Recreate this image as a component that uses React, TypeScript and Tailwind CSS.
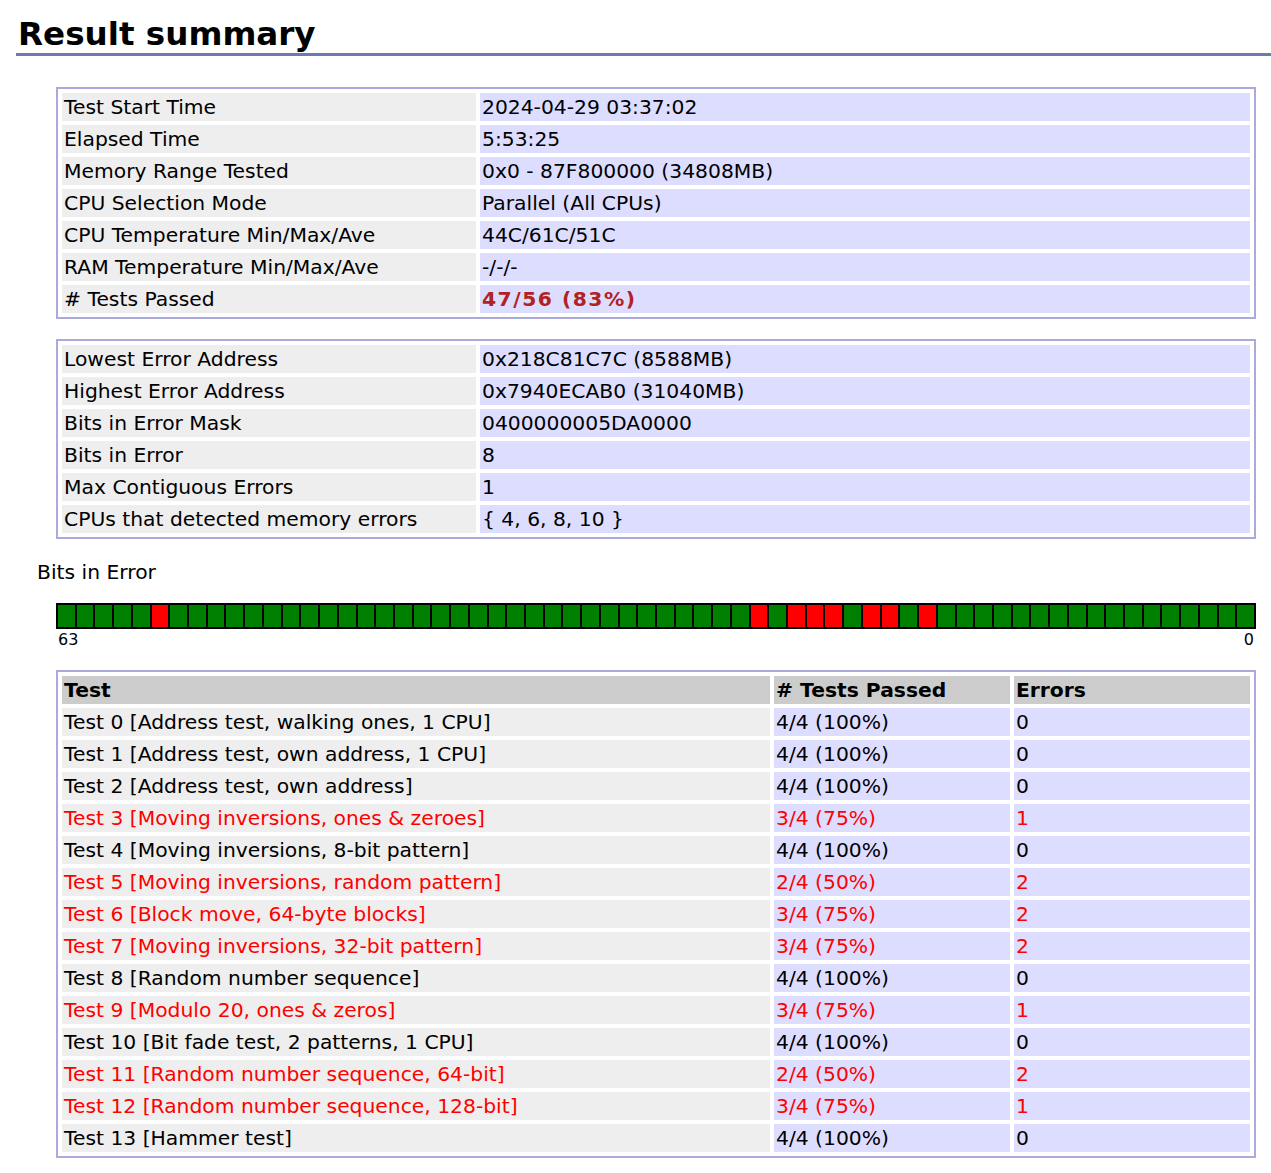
const summary: [string, string][] = [
    ['Test Start Time', '2024-04-29 03:37:02'],
    ['Elapsed Time', '5:53:25'],
    ['Memory Range Tested', '0x0 - 87F800000 (34808MB)'],
    ['CPU Selection Mode', 'Parallel (All CPUs)'],
    ['CPU Temperature Min/Max/Ave', '44C/61C/51C'],
    ['RAM Temperature Min/Max/Ave', '-/-/-'],
];

const errorInfo: [string, string][] = [
    ['Lowest Error Address', '0x218C81C7C (8588MB)'],
    ['Highest Error Address', '0x7940ECAB0 (31040MB)'],
    ['Bits in Error Mask', '0400000005DA0000'],
    ['Bits in Error', '8'],
    ['Max Contiguous Errors', '1'],
    ['CPUs that detected memory errors', '{ 4, 6, 8, 10 }'],
];

const tests: [string, string, string, boolean][] = [
    ['Test 0 [Address test, walking ones, 1 CPU]', '4/4 (100%)', '0', false],
    ['Test 1 [Address test, own address, 1 CPU]', '4/4 (100%)', '0', false],
    ['Test 2 [Address test, own address]', '4/4 (100%)', '0', false],
    ['Test 3 [Moving inversions, ones & zeroes]', '3/4 (75%)', '1', true],
    ['Test 4 [Moving inversions, 8-bit pattern]', '4/4 (100%)', '0', false],
    ['Test 5 [Moving inversions, random pattern]', '2/4 (50%)', '2', true],
    ['Test 6 [Block move, 64-byte blocks]', '3/4 (75%)', '2', true],
    ['Test 7 [Moving inversions, 32-bit pattern]', '3/4 (75%)', '2', true],
    ['Test 8 [Random number sequence]', '4/4 (100%)', '0', false],
    ['Test 9 [Modulo 20, ones & zeros]', '3/4 (75%)', '1', true],
    ['Test 10 [Bit fade test, 2 patterns, 1 CPU]', '4/4 (100%)', '0', false],
    ['Test 11 [Random number sequence, 64-bit]', '2/4 (50%)', '2', true],
    ['Test 12 [Random number sequence, 128-bit]', '3/4 (75%)', '1', true],
    ['Test 13 [Hammer test]', '4/4 (100%)', '0', false],
];

// bit mask 0x0400000005DA0000, bit 63 on the left
const MASK = 0x0400000005DA0000n;
const bits = Array.from({ length: 64 }, (_, i) => ((MASK >> BigInt(63 - i)) & 1n) === 1n);

const cell = 'h-[28px] px-[2px] pt-[1px] pb-0 align-middle leading-[27px]';

function InfoTable({ rows, extra }: { rows: [string, string][], extra?: React.ReactNode }) {
    return (
        <table className="ml-[40px] w-[1200px] border-2 border-[#aaaadd] border-separate border-spacing-[4px]">
            <tbody>
                {rows.map(([k, v]) => (
                    <tr key={k}>
                        <td className={`${cell} w-[414px] bg-[#eeeeee]`}>{k}</td>
                        <td className={`${cell} bg-[#ddddff]`}>{v}</td>
                    </tr>
                ))}
                {extra}
            </tbody>
        </table>
    );
}

export default function App() {
    return (
        <div className="bg-white text-black text-[20.3px] min-h-[1173px] pl-[16px]" style={{ fontFamily: '"DejaVu Sans", Verdana, sans-serif' }}>
            <h1 className="pt-[16px] text-[32.6px] font-bold leading-[37px] border-b-[3px] border-[#6a7bb3] pl-[2px]">
                Result summary
            </h1>

            <div className="mt-[31px]">
                <InfoTable
                    rows={summary}
                    extra={
                        <tr>
                            <td className={`${cell} w-[414px] bg-[#eeeeee]`}># Tests Passed</td>
                            <td className={`${cell} bg-[#ddddff] font-bold tracking-[1.5px] text-[#b22222]`}>47/56 (83%)</td>
                        </tr>
                    }
                />
            </div>

            <div className="mt-[20px]">
                <InfoTable rows={errorInfo} />
            </div>

            <div className="mt-[21px] ml-[21px] leading-[24px]">Bits in Error</div>

            <div className="mt-[19px] ml-[40px] w-[1200px]">
                <div className="flex h-[26px] border-2 border-black bg-black gap-[2px]">
                    {bits.map((b, i) => (
                        <div key={i} className={`flex-1 ${b ? 'bg-[#ff0000]' : 'bg-[#008000]'}`} />
                    ))}
                </div>
                <div className="flex justify-between text-[16px] leading-[20px] px-[2px] mt-[1px]">
                    <span>63</span>
                    <span>0</span>
                </div>
            </div>

            <table className="mt-[20px] ml-[40px] w-[1200px] border-2 border-[#aaaadd] border-separate border-spacing-[4px]">
                <thead>
                    <tr className="font-bold">
                        <td className={`${cell} w-[708px] bg-[#cccccc]`}>Test</td>
                        <td className={`${cell} w-[236px] bg-[#cccccc]`}># Tests Passed</td>
                        <td className={`${cell} bg-[#cccccc]`}>Errors</td>
                    </tr>
                </thead>
                <tbody>
                    {tests.map(([name, passed, errs, bad]) => (
                        <tr key={name} className={bad ? 'text-[#ff0000]' : ''}>
                            <td className={`${cell} bg-[#eeeeee]`}>{name}</td>
                            <td className={`${cell} bg-[#ddddff]`}>{passed}</td>
                            <td className={`${cell} bg-[#ddddff]`}>{errs}</td>
                        </tr>
                    ))}
                </tbody>
            </table>
        </div>
    );
}
